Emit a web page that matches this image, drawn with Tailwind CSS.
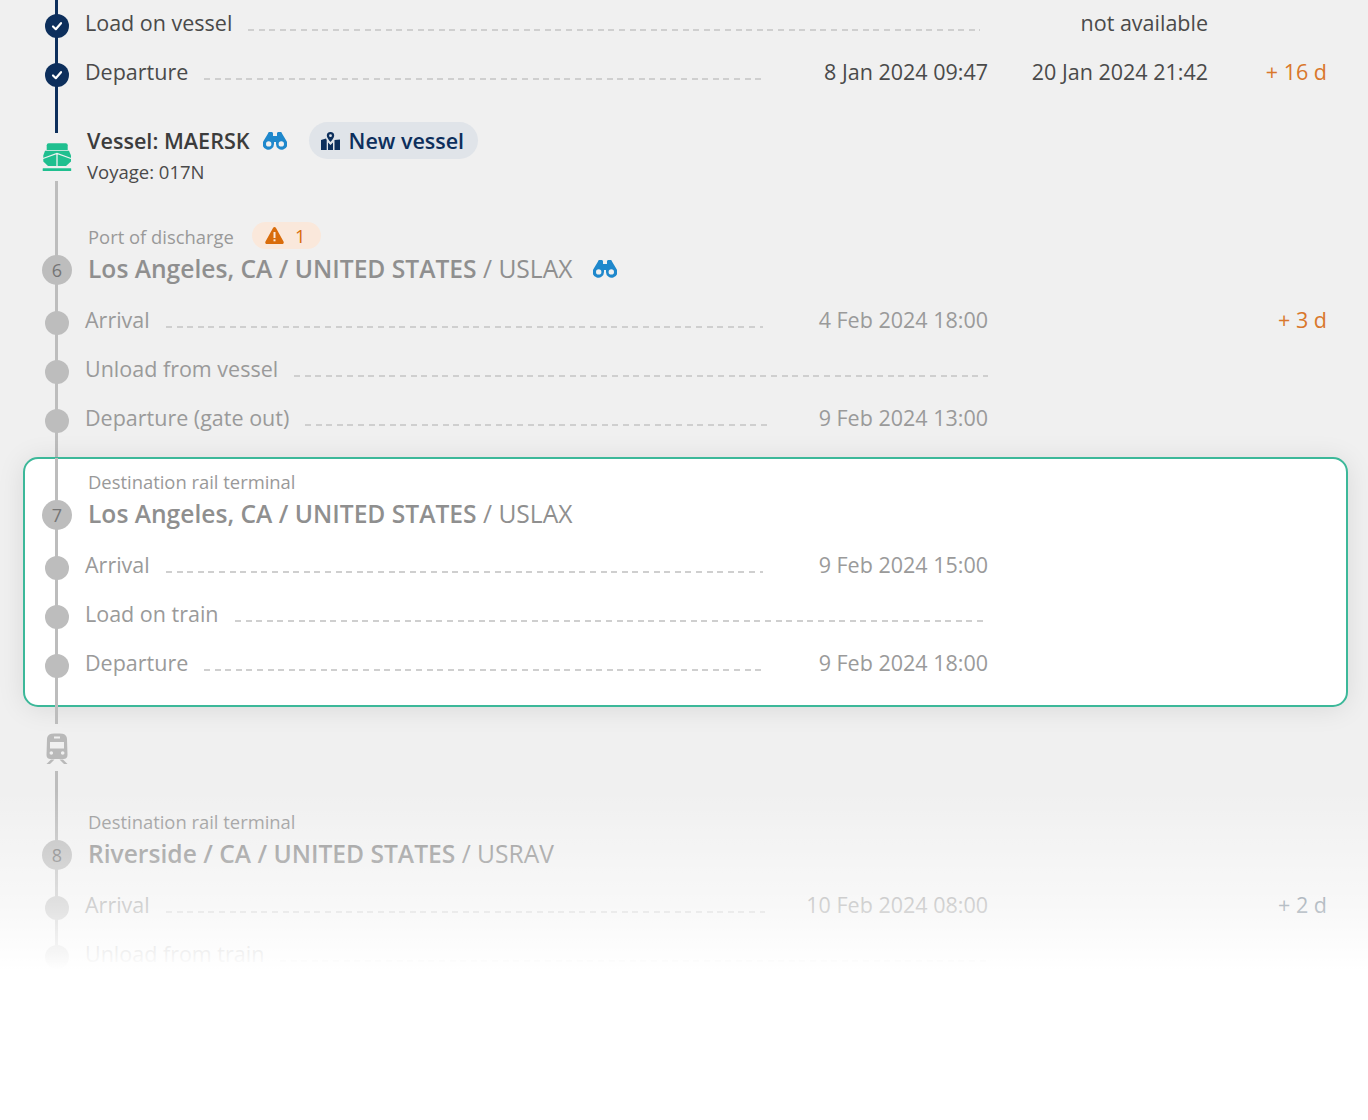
<!DOCTYPE html>
<html lang="en">
<head>
  <meta charset="UTF-8" />
  <title>Shipment route</title>
  <script src="https://cdn.jsdelivr.net/npm/@tailwindcss/browser@4"></script>
</head>
<body class="font-['Open_Sans',sans-serif]">
  <div class="relative h-[1120px] overflow-hidden bg-[#f0f0f0] pl-[23px] pr-[21px] text-[21.5px] text-[#4a4a4a]">

    <!-- done rows -->
    <div class="flex h-[49px] items-start pr-[20px] leading-[45px]">
      <div class="relative h-full w-[62px] shrink-0 pt-[14px]">
        <span class="absolute inset-y-0 left-[32px] w-[3px] bg-[#0d2f5c]"></span>
        <span class="relative ml-[22px] flex h-[24px] w-[24px] items-center justify-center rounded-full bg-[#0d2f5c]">
          <svg class="h-[12px] w-[12px]" viewBox="0 0 12 12" fill="none" stroke="#fff" stroke-width="2.2" stroke-linecap="round" stroke-linejoin="round"><path d="M2 6.500l2.800 2.700L10 3.200"/></svg>
        </span>
      </div>
      <div class="flex flex-1 items-center">
        <span>Load on vessel</span>
        <span class="ml-4 mr-2 mt-[14px] h-[2px] flex-1 bg-[repeating-linear-gradient(90deg,#cfcfcf_0_6px,transparent_6px_10.6px)]"></span>
      </div>
      <div class="w-[220px] text-right">not available</div>
      <div class="w-[119px] text-right"></div>
    </div>
    <div class="flex h-[49px] items-start pr-[20px] leading-[45px]">
      <div class="relative h-full w-[62px] shrink-0 pt-[14px]">
        <span class="absolute inset-y-0 left-[32px] w-[3px] bg-[#0d2f5c]"></span>
        <span class="relative ml-[22px] flex h-[24px] w-[24px] items-center justify-center rounded-full bg-[#0d2f5c]">
          <svg class="h-[12px] w-[12px]" viewBox="0 0 12 12" fill="none" stroke="#fff" stroke-width="2.2" stroke-linecap="round" stroke-linejoin="round"><path d="M2 6.500l2.800 2.700L10 3.200"/></svg>
        </span>
      </div>
      <div class="flex flex-1 items-center">
        <span>Departure</span>
        <span class="ml-4 mt-[14px] h-[2px] flex-1 bg-[repeating-linear-gradient(90deg,#cfcfcf_0_6px,transparent_6px_10.6px)]"></span>
        <span class="w-[223px] pl-[2px] text-right">8 Jan 2024 09:47</span>
      </div>
      <div class="w-[220px] text-right">20 Jan 2024 21:42</div>
      <div class="w-[119px] text-right text-[#d9772b]">+ 16 d</div>
    </div>

    <!-- vessel -->
    <div class="flex h-[124px]">
      <div class="relative h-full w-[64px] shrink-0">
        <span class="absolute left-[32px] top-0 h-[35px] w-[3px] bg-[#0d2f5c]"></span>
        <svg class="absolute left-[19px] top-[44px] h-[30px] w-[30px] text-[#1fbf8f]" viewBox="0 0 30 30" fill="currentColor">
          <path d="M4.700 8V3.300a2 2 0 0 1 2-2h17a2 2 0 0 1 2 2V8z"/>
          <path d="M3 8.800h24l2 4.700v6L24 24H6l-4.700-4.500v-6z"/>
          <path d="M1 16.500L15 11.500 29 16.500M15 11.500V24" fill="none" stroke="#f0f0f0" stroke-width="1.300"/>
          <rect x="0.700" y="26.300" width="28.500" height="2.800" rx="0.500"/>
        </svg>
        <span class="absolute bottom-0 left-[32px] top-[83px] w-[3px] bg-[#bdbdbd]"></span>
      </div>
      <div class="pt-[26px]">
        <div class="flex h-[34px] items-center">
          <span class="text-[21.6px] font-semibold text-[#3c3c3c]">Vessel: MAERSK</span>
          <svg class="ml-[13px] h-[18px] w-[24px] text-[#1f88cc]" viewBox="0 0 24 18" fill="currentColor" fill-rule="evenodd"><path d="M5 1.500C5 .700 5.700 0 6.500 0h2C9.400 0 10 .600 10 1.500V4h4V1.500C14 .600 14.600 0 15.500 0h2c.800 0 1.500.700 1.500 1.500L23.500 9A5.700 5.700 0 1 1 13 12v-2h-2v2A5.700 5.700 0 1 1 .500 9zM5.700 9.200a2.700 2.700 0 1 0 0 5.400 2.700 2.700 0 0 0 0-5.400zM18.300 9.200a2.700 2.700 0 1 0 0 5.400 2.700 2.700 0 0 0 0-5.400z"/></svg>
          <span class="mb-[2px] ml-[22px] flex h-[37px] items-center gap-[9px] rounded-full bg-[#e0e4e9] pl-[12px] pr-[14px] pt-[2px] font-semibold text-[#0d2f5c]">
            <svg class="h-[18px] w-[19px]" viewBox="0 0 19 18" fill="currentColor" fill-rule="evenodd"><path d="M9.500 0a3.700 3.700 0 0 1 3.700 3.700c0 2-2.400 4.800-3.700 6.300C8.200 8.500 5.800 5.700 5.800 3.700A3.700 3.700 0 0 1 9.500 0zm0 2.300a1.400 1.400 0 1 0 0 2.800 1.400 1.400 0 0 0 0-2.800z"/><path d="M0 8l5-1.500.700 1.500v10L0 18zM7 10.500l2.500 2.500 2.500-2.500V18H7zM13.500 8l5.500-.500V18h-5.500z"/></svg>
            New vessel
          </span>
        </div>
        <div class="h-[28px] text-[18.5px] leading-[28px] text-[#4a4a4a]">Voyage: 017N</div>
      </div>
    </div>

    <!-- port of discharge -->
    <div class="flex h-[74px]">
      <div class="relative h-full w-[65px] shrink-0 pt-[33px]">
        <span class="absolute inset-y-0 left-[32px] w-[3px] bg-[#bdbdbd]"></span>
        <span class="relative ml-[19px] flex h-[30px] w-[30px] items-center justify-center rounded-full bg-[#bdbdbd] text-[18px] text-[#757575]">6</span>
      </div>
      <div>
        <div class="flex h-[30px] items-center text-[18.4px] text-[#999]">
          <span>Port of discharge</span>
          <span class="-mt-[3px] ml-[18px] flex h-[27px] w-[69px] items-center justify-center gap-[11px] rounded-full bg-[#fae8db] pr-[2px] font-medium text-[#d96c0b]">
            <svg class="h-[17px] w-[19px]" viewBox="0 0 19 17" fill-rule="evenodd"><path fill="currentColor" d="M8 1c.700-1.300 2.300-1.300 3 0l7.500 13.500c.700 1.200-.1 2.500-1.500 2.500H2C.6 17-.2 15.700.5 14.500z"/><rect x="8.500" y="5" width="2" height="6" fill="#fae8db"/><rect x="8.500" y="12.300" width="2" height="2" fill="#fae8db"/></svg>
            <span>1</span>
          </span>
        </div>
        <div class="flex h-[34px] items-center text-[24.6px] text-[#8f8f8f]">
          <span><span class="font-semibold">Los Angeles, CA / UNITED STATES</span> / USLAX</span>
          <svg class="ml-[21px] h-[18px] w-[24px] text-[#1f88cc]" viewBox="0 0 24 18" fill="currentColor" fill-rule="evenodd"><path d="M5 1.500C5 .700 5.700 0 6.500 0h2C9.400 0 10 .600 10 1.500V4h4V1.500C14 .600 14.600 0 15.500 0h2c.800 0 1.500.700 1.500 1.500L23.500 9A5.700 5.700 0 1 1 13 12v-2h-2v2A5.700 5.700 0 1 1 .500 9zM5.700 9.200a2.700 2.700 0 1 0 0 5.400 2.700 2.700 0 0 0 0-5.400zM18.300 9.200a2.700 2.700 0 1 0 0 5.400 2.700 2.700 0 0 0 0-5.400z"/></svg>
        </div>
      </div>
    </div>

    <div class="flex h-[49px] items-start pr-[20px] leading-[47px] text-[#9a9a9a]">
      <div class="relative h-full w-[62px] shrink-0 pt-[15px]">
        <span class="absolute inset-y-0 left-[32px] w-[3px] bg-[#bdbdbd]"></span>
        <span class="relative ml-[22px] block h-[24px] w-[24px] rounded-full bg-[#bdbdbd]"></span>
      </div>
      <div class="flex flex-1 items-center">
        <span>Arrival</span>
        <span class="ml-4 mt-[15px] h-[2px] flex-1 bg-[repeating-linear-gradient(90deg,#cfcfcf_0_6px,transparent_6px_10.6px)]"></span>
        <span class="w-[225px] text-right">4 Feb 2024 18:00</span>
      </div>
      <div class="w-[220px]"></div>
      <div class="w-[119px] text-right text-[#d9772b]">+ 3 d</div>
    </div>
    <div class="flex h-[49px] items-start pr-[20px] leading-[47px] text-[#9a9a9a]">
      <div class="relative h-full w-[62px] shrink-0 pt-[15px]">
        <span class="absolute inset-y-0 left-[32px] w-[3px] bg-[#bdbdbd]"></span>
        <span class="relative ml-[22px] block h-[24px] w-[24px] rounded-full bg-[#bdbdbd]"></span>
      </div>
      <div class="flex flex-1 items-center">
        <span>Unload from vessel</span>
        <span class="ml-4 mt-[15px] h-[2px] flex-1 bg-[repeating-linear-gradient(90deg,#cfcfcf_0_6px,transparent_6px_10.6px)]"></span>
      </div>
      <div class="w-[220px]"></div>
      <div class="w-[119px]"></div>
    </div>
    <div class="flex h-[49px] items-start pr-[20px] leading-[47px] text-[#9a9a9a]">
      <div class="relative h-full w-[62px] shrink-0 pt-[15px]">
        <span class="absolute inset-y-0 left-[32px] w-[3px] bg-[#bdbdbd]"></span>
        <span class="relative ml-[22px] block h-[24px] w-[24px] rounded-full bg-[#bdbdbd]"></span>
      </div>
      <div class="flex flex-1 items-center">
        <span>Departure (gate out)</span>
        <span class="ml-4 mt-[15px] h-[2px] flex-1 bg-[repeating-linear-gradient(90deg,#cfcfcf_0_6px,transparent_6px_10.6px)]"></span>
        <span class="w-[220px] text-right">9 Feb 2024 13:00</span>
      </div>
      <div class="w-[220px]"></div>
      <div class="w-[119px]"></div>
    </div>
    <div class="relative h-[15px]"><span class="absolute inset-y-0 left-[32px] w-[3px] bg-[#bdbdbd]"></span></div>

    <!-- highlighted terminal -->
    <div class="relative ml-[1px] rounded-[14px] bg-white shadow-[0_2px_28px_rgba(0,0,0,0.1)] outline-2 -outline-offset-1 outline-[#3cb899]">
      <div class="-ml-[1px]">
        <div class="relative h-[9px]"><span class="absolute inset-y-0 left-[32px] w-[3px] bg-[#bdbdbd]"></span></div>
        <div class="flex h-[74px]">
          <div class="relative h-full w-[65px] shrink-0 pt-[33px]">
            <span class="absolute inset-y-0 left-[32px] w-[3px] bg-[#bdbdbd]"></span>
            <span class="relative ml-[19px] flex h-[30px] w-[30px] items-center justify-center rounded-full bg-[#bdbdbd] text-[18px] text-[#757575]">7</span>
          </div>
          <div>
            <div class="flex h-[30px] items-center text-[18.4px] text-[#999]">Destination rail terminal</div>
            <div class="flex h-[34px] items-center text-[24.6px] text-[#8f8f8f]">
              <span><span class="font-semibold">Los Angeles, CA / UNITED STATES</span> / USLAX</span>
            </div>
          </div>
        </div>
        <div class="flex h-[49px] items-start pr-[20px] leading-[47px] text-[#9a9a9a]">
          <div class="relative h-full w-[62px] shrink-0 pt-[15px]">
            <span class="absolute inset-y-0 left-[32px] w-[3px] bg-[#bdbdbd]"></span>
            <span class="relative ml-[22px] block h-[24px] w-[24px] rounded-full bg-[#bdbdbd]"></span>
          </div>
          <div class="flex flex-1 items-center">
            <span>Arrival</span>
            <span class="ml-4 mt-[15px] h-[2px] flex-1 bg-[repeating-linear-gradient(90deg,#cfcfcf_0_6px,transparent_6px_10.6px)]"></span>
            <span class="w-[225px] text-right">9 Feb 2024 15:00</span>
          </div>
          <div class="w-[220px]"></div>
          <div class="w-[119px]"></div>
        </div>
        <div class="flex h-[49px] items-start pr-[20px] leading-[47px] text-[#9a9a9a]">
          <div class="relative h-full w-[62px] shrink-0 pt-[15px]">
            <span class="absolute inset-y-0 left-[32px] w-[3px] bg-[#bdbdbd]"></span>
            <span class="relative ml-[22px] block h-[24px] w-[24px] rounded-full bg-[#bdbdbd]"></span>
          </div>
          <div class="flex flex-1 items-center">
            <span>Load on train</span>
            <span class="ml-4 mt-[15px] h-[2px] flex-1 bg-[repeating-linear-gradient(90deg,#cfcfcf_0_6px,transparent_6px_10.6px)]"></span>
          </div>
          <div class="w-[220px]"></div>
          <div class="w-[119px]"></div>
        </div>
        <div class="flex h-[49px] items-start pr-[20px] leading-[47px] text-[#9a9a9a]">
          <div class="relative h-full w-[62px] shrink-0 pt-[15px]">
            <span class="absolute inset-y-0 left-[32px] w-[3px] bg-[#bdbdbd]"></span>
            <span class="relative ml-[22px] block h-[24px] w-[24px] rounded-full bg-[#bdbdbd]"></span>
          </div>
          <div class="flex flex-1 items-center">
            <span>Departure</span>
            <span class="ml-4 mt-[15px] h-[2px] flex-1 bg-[repeating-linear-gradient(90deg,#cfcfcf_0_6px,transparent_6px_10.6px)]"></span>
            <span class="w-[223px] pl-[2px] text-right">9 Feb 2024 18:00</span>
          </div>
          <div class="w-[220px]"></div>
          <div class="w-[119px]"></div>
        </div>
        <div class="relative h-[18px]"><span class="absolute inset-y-0 left-[32px] w-[3px] bg-[#bdbdbd]"></span></div>
      </div>
    </div>

    <!-- train leg -->
    <div class="relative h-[101px]">
      <span class="absolute left-[32px] top-0 h-[18px] w-[3px] bg-[#bdbdbd]"></span>
      <svg class="absolute left-[22px] top-[27px] h-[32px] w-[24px] text-[#b9b9b9]" viewBox="0 0 24 32" fill="currentColor" fill-rule="evenodd">
        <path d="M2 6c0-3 2-4.700 4.500-5.200 3-.5 8-.5 11 0C20 1.300 22 3 22 6l.5 16c0 2.500-1.500 4-4 4h-13c-2.500 0-4-1.500-4-4zM5 9v6.500h14V9zM9 3.500v2h6v-2zM4.500 20a1.800 1.800 0 1 0 3.600 0 1.800 1.800 0 0 0-3.600 0zM15.900 20a1.800 1.800 0 1 0 3.600 0 1.800 1.800 0 0 0-3.600 0z"/>
        <path d="M6 26.500h3.500L5 31H1.500zM14.500 26.500H18l4.500 4.500H19z"/>
      </svg>
      <span class="absolute bottom-0 left-[32px] top-[65px] w-[3px] bg-[#bdbdbd]"></span>
    </div>

    <!-- destination terminal -->
    <div class="flex h-[74px]">
      <div class="relative h-full w-[65px] shrink-0 pt-[33px]">
        <span class="absolute inset-y-0 left-[32px] w-[3px] bg-[#bdbdbd]"></span>
        <span class="relative ml-[19px] flex h-[30px] w-[30px] items-center justify-center rounded-full bg-[#bdbdbd] text-[18px] text-[#757575]">8</span>
      </div>
      <div>
        <div class="flex h-[30px] items-center text-[18.4px] text-[#999]">Destination rail terminal</div>
        <div class="flex h-[34px] items-center text-[24.6px] text-[#8f8f8f]">
          <span><span class="font-semibold">Riverside / CA / UNITED STATES</span> / USRAV</span>
        </div>
      </div>
    </div>
    <div class="flex h-[49px] items-start pr-[20px] leading-[47px] text-[#9a9a9a]">
      <div class="relative h-full w-[62px] shrink-0 pt-[15px]">
        <span class="absolute inset-y-0 left-[32px] w-[3px] bg-[#bdbdbd]"></span>
        <span class="relative ml-[22px] block h-[24px] w-[24px] rounded-full bg-[#bdbdbd]"></span>
      </div>
      <div class="flex flex-1 items-center">
        <span>Arrival</span>
        <span class="ml-4 mt-[15px] h-[2px] flex-1 bg-[repeating-linear-gradient(90deg,#cfcfcf_0_6px,transparent_6px_10.6px)]"></span>
        <span class="w-[223px] text-right">10 Feb 2024 08:00</span>
      </div>
      <div class="w-[220px]"></div>
      <div class="w-[119px] text-right text-[#5f7080]">+ 2 d</div>
    </div>
    <div class="flex h-[49px] items-start pr-[20px] leading-[47px] text-[#9a9a9a]">
      <div class="relative h-full w-[62px] shrink-0 pt-[15px]">
        <span class="absolute inset-y-0 left-[32px] w-[3px] bg-[#bdbdbd]"></span>
        <span class="relative ml-[22px] block h-[24px] w-[24px] rounded-full bg-[#bdbdbd]"></span>
      </div>
      <div class="flex flex-1 items-center">
        <span>Unload from train</span>
        <span class="ml-4 mt-[15px] h-[2px] flex-1 bg-[repeating-linear-gradient(90deg,#cfcfcf_0_6px,transparent_6px_10.6px)]"></span>
      </div>
      <div class="w-[220px]"></div>
      <div class="w-[119px]"></div>
    </div>

    <!-- fade out over the end of the list -->
    <div class="absolute inset-x-0 bottom-0 top-[790px] bg-[linear-gradient(to_bottom,rgba(255,255,255,0)_0,rgba(255,255,255,0.55)_115px,rgba(255,255,255,0.88)_165px,#fff_180px)]"></div>
  </div>
</body>
</html>
